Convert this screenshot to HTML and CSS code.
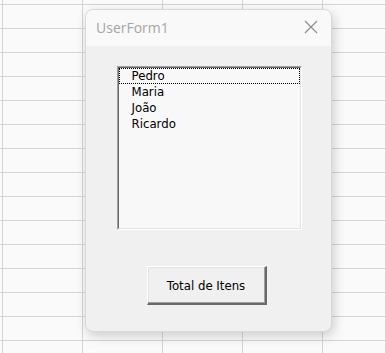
FILE: index.html
```html
<!DOCTYPE html>
<html lang="pt">
<head>
    <meta charset="UTF-8">
    <title>UserForm1</title>
    <link rel="stylesheet" href="styles.css">
</head>
<body>

<!-- Excel sheet behind the form -->
<div class="sheet">
    <div class="form">
        <div class="titlebar">
            <span class="title">UserForm1</span>
            <svg class="close" width="14" height="14" viewBox="0 0 14 14">
                <path d="M1 1 L13 13 M13 1 L1 13" stroke="#8a8a8a" stroke-width="1.1" fill="none"/>
            </svg>
        </div>
        <div class="form-body">
            <div class="listbox">
                <div class="listbox-inner">
                    <div class="item focused">Pedro</div>
                    <div class="item">Maria</div>
                    <div class="item">João</div>
                    <div class="item">Ricardo</div>
                </div>
            </div>
            <button class="total-btn">Total de Itens</button>
        </div>
    </div>
</div>

</body>
</html>
```

FILE: styles.css
```css
body {
    margin: 0;
    width: 385px;
    height: 353px;
    overflow: hidden;
    background-color: #fafafa;
    background-image:
        linear-gradient(to right, #d4d4d4 1px, transparent 1px),
        linear-gradient(to bottom, #d4d4d4 1px, transparent 1px);
    background-size: 80px 24px;
    background-position: 2px 4px;
}

.sheet {
    padding: 9px 0 0 85px;
}

.form {
    width: 247px;
    height: 323px;
    border-radius: 8px;
    border: 1px solid #d8d8d8;
    box-sizing: border-box;
    background-color: #f0f0f0;
    box-shadow: 2px 4px 12px rgba(0, 0, 0, 0.18);
    overflow: hidden;
}

.titlebar {
    height: 36px;
    background-color: #f9f9f9;
    display: flex;
    align-items: center;
    justify-content: space-between;
    padding: 0 13px 0 10px;
}

.title {
    font-family: 'Open Sans', 'Noto Sans', sans-serif;
    font-size: 14px;
    color: #a6a6a6;
    margin-top: -2px;
}

.close {
    margin-top: -2px;
}

.form-body {
    display: flex;
    flex-direction: column;
    align-items: center;
    padding-top: 20px;
}

.listbox {
    width: 185px;
    height: 164px;
    box-sizing: border-box;
    border-top: 1px solid #a0a0a0;
    border-left: 1px solid #a0a0a0;
    border-right: 1px solid #ffffff;
    border-bottom: 1px solid #ffffff;
    margin-left: 1px;
}

.listbox-inner {
    height: 100%;
    box-sizing: border-box;
    border-top: 1px solid #696969;
    border-left: 1px solid #696969;
    border-right: 1px solid #e3e3e3;
    border-bottom: 1px solid #e3e3e3;
    background-color: #f8f8f8;
}

.item {
    font-family: 'DejaVu Sans', sans-serif;
    font-size: 11.75px;
    color: #000;
    height: 16px;
    line-height: 16px;
    padding-left: 13px;
    box-sizing: border-box;
}

.item.focused {
    border: 1px dotted #000;
    line-height: 14px;
    padding-left: 12px;
}

.total-btn {
    margin-top: 36px;
    margin-left: -4px;
    width: 120px;
    height: 39px;
    background-color: #f0f0f0;
    font-family: 'DejaVu Sans', sans-serif;
    font-size: 11.75px;
    color: #000;
    border-top: 1px solid #ffffff;
    border-left: 1px solid #ffffff;
    border-right: 2px solid #696969;
    border-bottom: 2px solid #696969;
    padding: 0;
    padding-top: 2px;
    box-shadow: inset -1px -1px 0 #a0a0a0, inset 1px 1px 0 #e3e3e3;
}
```
